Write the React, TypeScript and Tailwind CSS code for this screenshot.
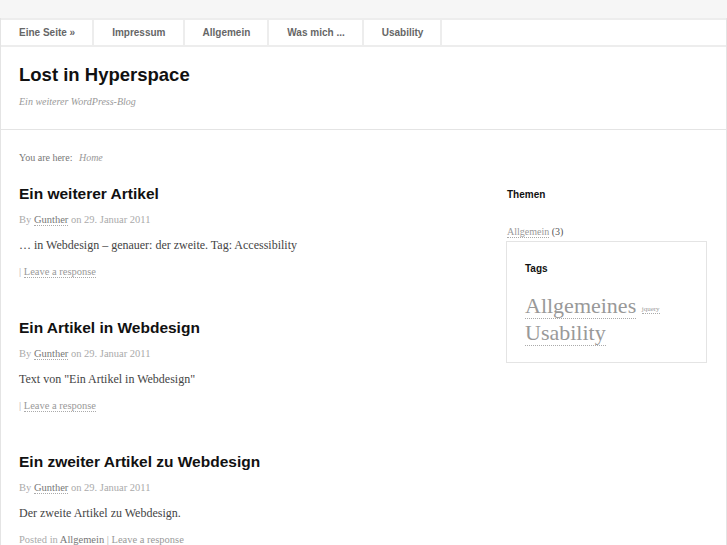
import React from 'react';

const sans = { fontFamily: '"Liberation Sans", Arial, sans-serif' };
const serif = { fontFamily: '"Liberation Serif", "Times New Roman", serif' };

const nav = ['Eine Seite »', 'Impressum', 'Allgemein', 'Was mich ...', 'Usability'];

type Post = { title: string; body: string; footer?: boolean };

const posts: Post[] = [
  { title: 'Ein weiterer Artikel', body: '… in Webdesign – genauer: der zweite. Tag: Accessibility' },
  { title: 'Ein Artikel in Webdesign', body: 'Text von "Ein Artikel in Webdesign"' },
  { title: 'Ein zweiter Artikel zu Webdesign', body: 'Der zweite Artikel zu Webdesign.', footer: true },
];

function Link({ children, className = '' }: { children: React.ReactNode; className?: string }) {
  return <span className={`border-b border-dotted border-[#aaa] ${className}`}>{children}</span>;
}

export default function App() {
  return (
    <div className="min-h-[545px] w-[727px] overflow-hidden bg-[#f6f6f6] pt-[18px]">
      <div className="border-x border-[#e4e4e4] bg-white min-h-[527px]">
        {/* nav */}
        <div className="flex h-[29px] border-y-2 border-[#ededed]" style={sans}>
          {nav.map((n) => (
            <div
              key={n}
              className="flex items-center border-r-2 border-[#ededed] pl-[18px] pr-[17px] text-[10px] font-bold text-[#666]"
            >
              {n}
            </div>
          ))}
        </div>

        {/* header */}
        <div className="border-b border-[#e4e4e4] px-[18px] pt-[17px] h-[83px]">
          <h1 className="text-[18.5px] font-bold leading-[22px] text-[#111]" style={sans}>
            Lost in Hyperspace
          </h1>
          <p className="mt-[8px] text-[10px] italic text-[#999]" style={serif}>
            Ein weiterer WordPress-Blog
          </p>
        </div>

        <div className="flex">
          {/* main */}
          <div className="flex-1 px-[18px] pt-[21px]">
            <p className="text-[10px] leading-[14px] text-[#777]" style={serif}>
              You are here: <span className="ml-1 italic text-[#999]">Home</span>
            </p>
            {posts.map((p) => (
              <div key={p.title} className="mt-[19px] h-[115px]">
                <h2 className="text-[15.5px] font-bold leading-[20px] text-[#111]" style={sans}>
                  {p.title}
                </h2>
                <p className="mt-[9px] text-[10.5px] leading-[14px] text-[#aaa]" style={serif}>
                  By <Link className="text-[#777]">Gunther</Link> on 29. Januar 2011
                </p>
                <p className="mt-[11px] text-[12px] leading-[15px] text-[#444]" style={serif}>
                  {p.body}
                </p>
                <p className="mt-[12px] text-[10.5px] leading-[14px] text-[#aaa]" style={serif}>
                  {p.footer ? (
                    <>
                      Posted in <span className="text-[#777]">Allgemein</span> | <span className="text-[#999]">Leave a response</span>
                    </>
                  ) : (
                    <>
                      | <Link className="text-[#999]">Leave a response</Link>
                    </>
                  )}
                </p>
              </div>
            ))}
          </div>

          {/* sidebar */}
          <div className="w-[201px] mr-[19px] pt-[58px]">
            <h3 className="pl-[1px] text-[10px] font-bold leading-[14px] text-[#111]" style={sans}>
              Themen
            </h3>
            <p className="mt-[23px] pl-[1px] text-[10px] leading-[14px] text-[#999]" style={serif}>
              <Link>Allgemein</Link> <span className="text-[#555]">(3)</span>
            </p>
            <div className="mt-[2px] border border-[#e4e4e4] px-[18px] pt-[20px] pb-[17px]">
              <h3 className="text-[10px] font-bold leading-[14px] text-[#111]" style={sans}>
                Tags
              </h3>
              <div className="mt-[18px] text-[22px] leading-[24px] text-[#999]" style={serif}>
                <div>
                  <Link>Allgemeines</Link>{' '}
                  <Link className="text-[7px] align-[2px]">jquery</Link>
                </div>
                <div>
                  <Link>Usability</Link>
                </div>
              </div>
            </div>
          </div>
        </div>
      </div>
    </div>
  );
}
